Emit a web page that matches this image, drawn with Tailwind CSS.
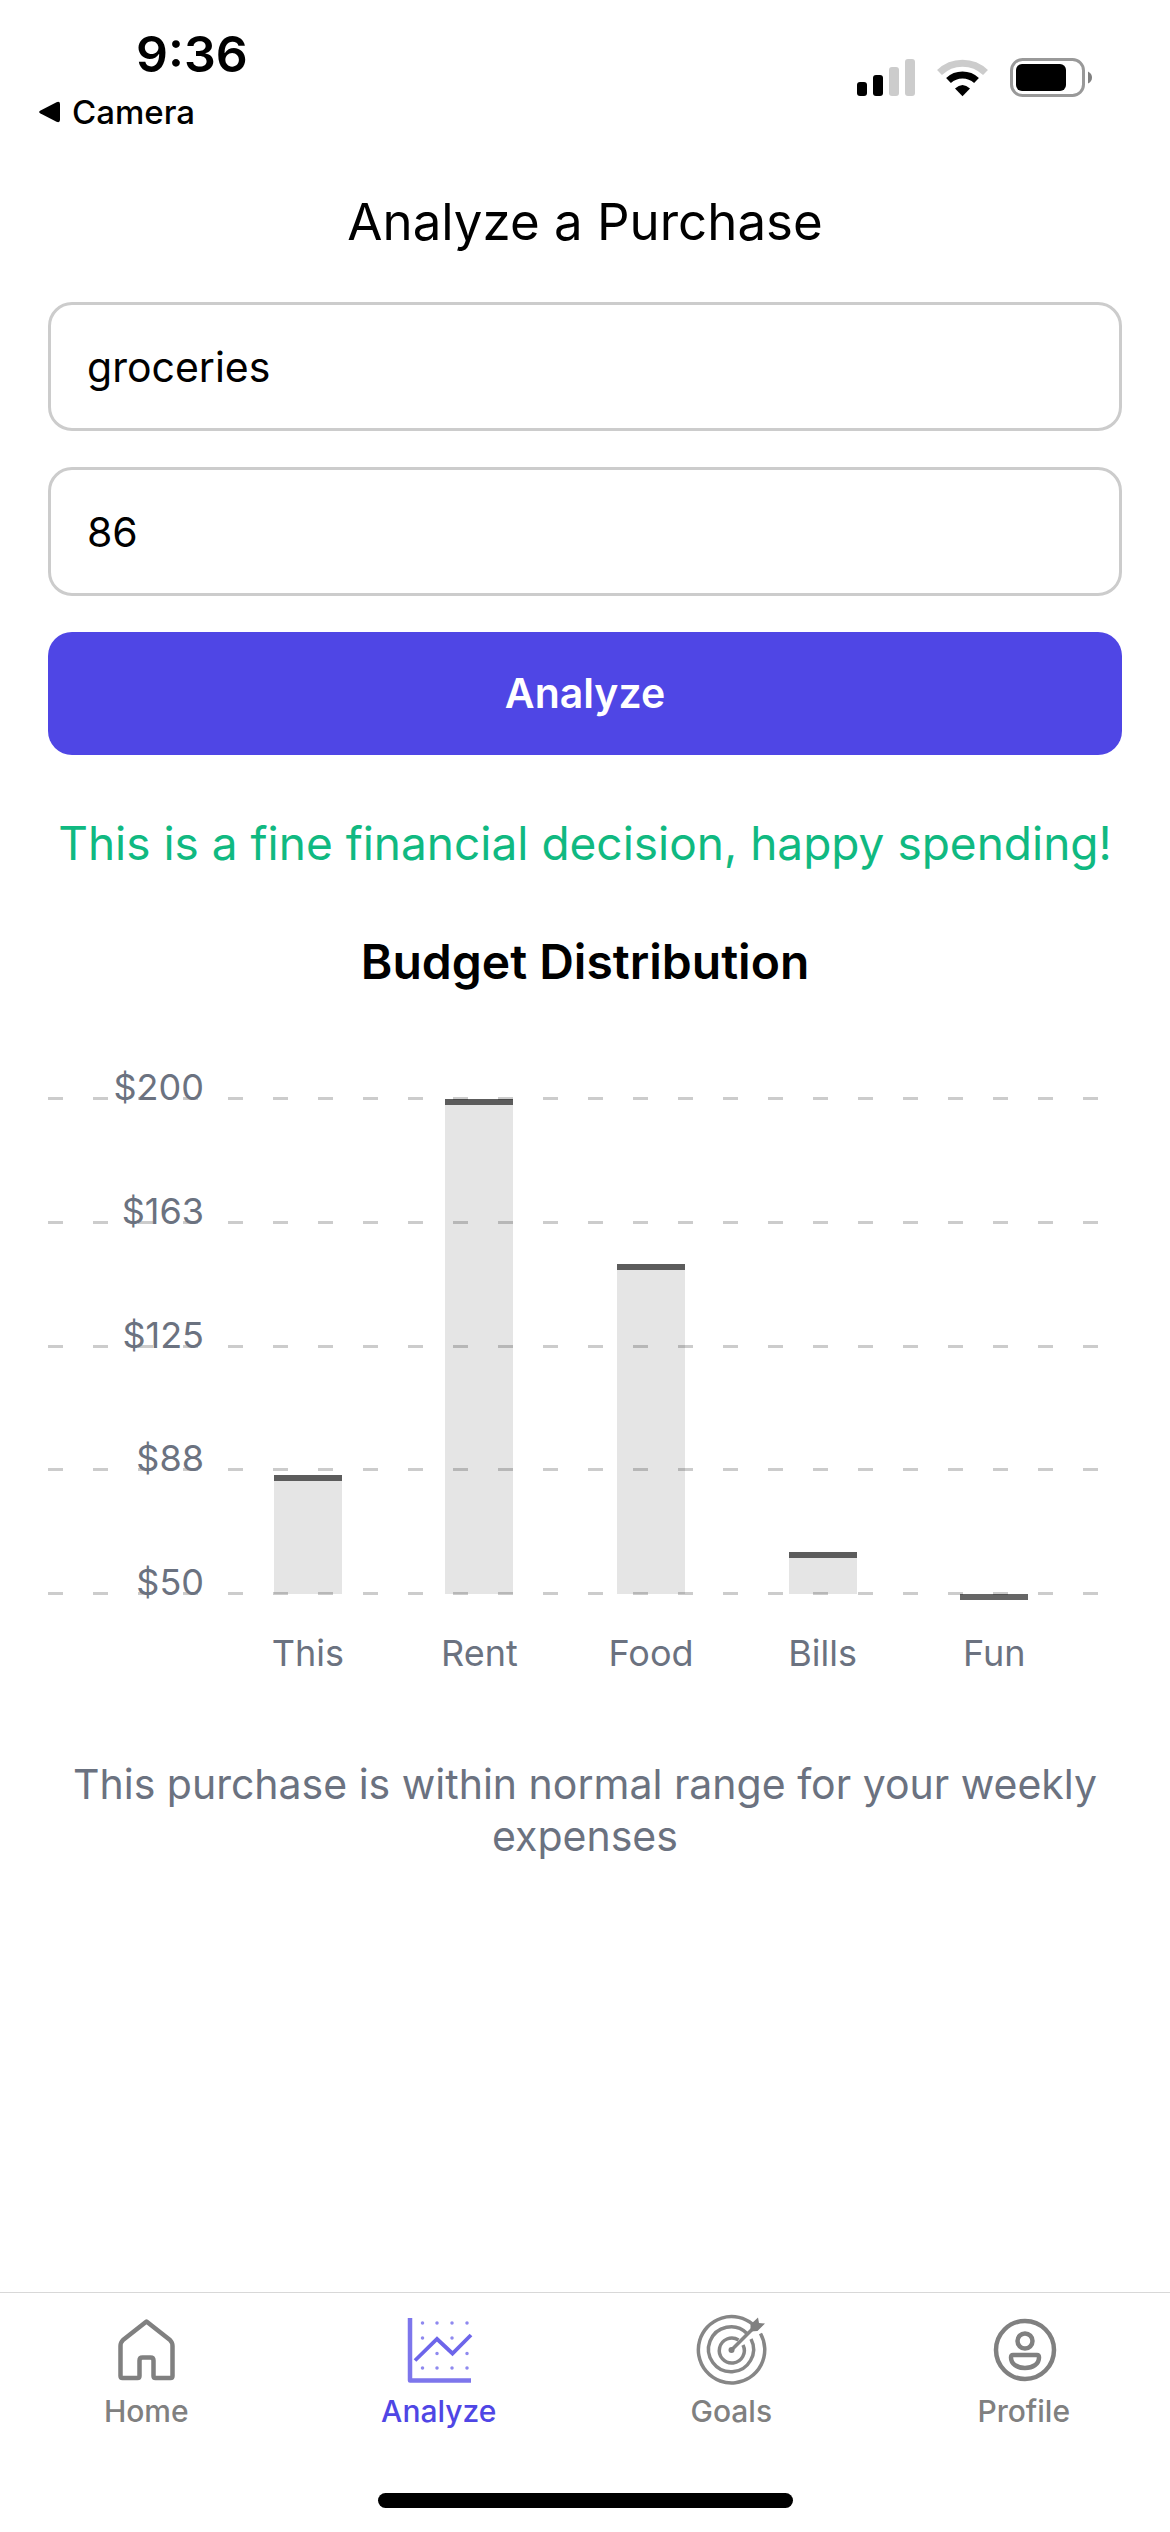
<!DOCTYPE html>
<html lang="en">
<head>
<meta charset="utf-8">
<meta name="viewport" content="width=device-width, initial-scale=1">
<title>Analyze a Purchase</title>
<script src="https://cdn.jsdelivr.net/npm/@tailwindcss/browser@4"></script>
</head>
<body class="flex min-h-screen flex-col bg-white font-['Inter',sans-serif] text-black">

<!-- Status bar -->
<header class="flex items-start justify-between pt-[26px] pr-[78px] pl-[38px]">
  <div class="flex flex-col gap-2.5">
    <time class="pl-[98px] text-[50px] leading-14 font-semibold">9:36</time>
    <button type="button" class="flex items-center gap-2.5 text-[33px] leading-10 font-medium">
      <svg class="h-6 w-6" viewBox="0 0 24 24" aria-hidden="true"><path d="M2.5 10.5 L18.5 2.2 Q22 1 22 4 V20 Q22 23 18.5 21.8 L2.5 13.5 Q-.2 12 2.5 10.5Z" fill="#000"/></svg>
      Camera
    </button>
  </div>
  <div class="mt-8 flex h-10">
    <svg class="h-10 w-[235px]" viewBox="0 0 235 40" role="img" aria-label="Signal, Wi-Fi and battery">
      <rect x="0" y="24" width="10" height="14" rx="3"/>
      <rect x="16" y="17" width="10" height="21" rx="3"/>
      <rect x="32" y="9" width="10" height="29" rx="3" fill="#ccc"/>
      <rect x="48" y="1" width="10" height="37" rx="3" fill="#ccc"/>
      <path d="M82.500 14.500 A33 33 0 0 1 128.500 14.500" fill="none" stroke="#ccc" stroke-width="7"/>
      <path d="M91.500 22.500 A20.500 20.500 0 0 1 119.500 22.500" fill="none" stroke="#000" stroke-width="7"/>
      <path d="M98 30.500 Q105.500 23.500 113 30.500 L105.500 38.200Z"/>
      <rect x="154.500" y="1.500" width="72" height="36" rx="11" fill="none" stroke="#999" stroke-width="3"/>
      <rect x="159" y="6" width="50" height="27" rx="6"/>
      <path d="M231 13.500 Q235 15.500 235 19.500 Q235 23.500 231 25.500Z" fill="#808080"/>
    </svg>
  </div>
</header>

<main class="mt-[58px] flex flex-1 flex-col px-12">
  <h1 class="text-center text-[51px] leading-[64px]">Analyze a Purchase</h1>

  <form class="mt-12 flex flex-col gap-9">
    <input type="text" aria-label="Purchase" value="groceries" class="h-[129px] w-full rounded-3xl border-3 border-[#ccc] bg-white px-9 text-[41px] outline-none">
    <input type="text" aria-label="Amount" inputmode="decimal" value="86" class="h-[129px] w-full rounded-3xl border-3 border-[#ccc] bg-white px-9 text-[41px] outline-none">
    <button type="button" class="h-[123px] w-full rounded-3xl bg-[#4f46e5] text-[41px] font-semibold text-white">Analyze</button>
  </form>

  <p class="mt-[58px] text-center text-[46px] leading-[60px] whitespace-nowrap text-[#10b981]">This is a fine financial decision, happy spending!</p>
  <h2 class="mt-[59px] text-center text-[48px] leading-[60px] font-semibold">Budget Distribution</h2>

  <!-- Bar chart, $50 to $200 -->
  <section class="mt-[107px]" aria-label="Budget Distribution chart">
    <div class="relative flex h-[495px]">
      <!-- Dashed grid lines -->
      <div class="absolute inset-x-0 -top-[2px] -bottom-px flex flex-col justify-between">
        <div class="h-[3px] bg-[repeating-linear-gradient(90deg,#0003_0_15px,transparent_15px_45px)]"></div>
        <div class="h-[3px] bg-[repeating-linear-gradient(90deg,#0003_0_15px,transparent_15px_45px)]"></div>
        <div class="h-[3px] bg-[repeating-linear-gradient(90deg,#0003_0_15px,transparent_15px_45px)]"></div>
        <div class="h-[3px] bg-[repeating-linear-gradient(90deg,#0003_0_15px,transparent_15px_45px)]"></div>
        <div class="h-[3px] bg-[repeating-linear-gradient(90deg,#0003_0_15px,transparent_15px_45px)]"></div>
      </div>
      <!-- Value labels, standing on the grid lines -->
      <div class="absolute -top-[30px] -bottom-[6px] left-0 flex w-[156px] flex-col justify-between text-right text-[36px] leading-9 text-[#6b7280]">
        <span>$200</span><span>$163</span><span>$125</span><span>$88</span><span>$50</span>
      </div>
      <div class="relative mr-[42px] ml-[174px] grid flex-1 grid-cols-5 items-end justify-items-center">
        <div class="w-[68px] border-t-6 border-black/60 bg-black/10" style="height:24%"></div>
        <div class="w-[68px] border-t-6 border-black/60 bg-black/10" style="height:100%"></div>
        <div class="w-[68px] border-t-6 border-black/60 bg-black/10" style="height:66.667%"></div>
        <div class="w-[68px] border-t-6 border-black/60 bg-black/10" style="height:8.400%"></div>
        <div class="h-0 w-[68px]"><div class="h-[6px] bg-black/60"></div></div>
      </div>
    </div>
    <div class="mt-[35px] mr-[42px] ml-[174px] grid grid-cols-5 text-center text-[36px] leading-12 text-[#6b7280]">
      <span>This</span><span>Rent</span><span>Food</span><span>Bills</span><span>Fun</span>
    </div>
  </section>

  <p class="mt-[81px] text-center text-[41px] leading-[52px] text-[#6b7280]">This purchase is within normal range for your weekly expenses</p>
</main>

<!-- Tab bar -->
<nav class="border-t border-[#d8d8d8] pt-5 pb-6" aria-label="Main">
  <div class="grid grid-cols-4 text-[30px] leading-9 font-medium text-[#808080]">
    <a href="#home" class="flex flex-col items-center gap-2">
      <svg class="h-[72px] w-[72px]" viewBox="0 0 72 72" fill="none" stroke="currentColor" stroke-width="4.500" stroke-linejoin="round" aria-hidden="true">
        <path d="M36.500 8.500 L13 27 Q10.500 29.500 10.500 33 V63 Q10.500 65 12.500 65 H27.500 Q29.500 65 29.500 63 V47.500 Q29.500 44.500 32.500 44.500 H40.500 Q43.500 44.500 43.500 47.500 V63 Q43.500 65 45.500 65 H60.500 Q62.500 65 62.500 63 V33 Q62.500 29.500 60 27 Z"/>
      </svg>
      <span>Home</span>
    </a>
    <a href="#analyze" aria-current="page" class="flex flex-col items-center gap-2 text-[#4f46e5]">
      <svg class="h-[72px] w-[72px]" viewBox="0 0 72 72" fill="none" stroke="#7d76ec" stroke-width="4.500" aria-hidden="true">
        <path d="M7 5 V67.500 H68" stroke-linejoin="round"/>
        <path d="M12 47.500 L34 26 L49.500 40.500 L68 22" stroke="#6d65ea" stroke-width="3.800"/>
        <path d="M19.500 10h.01M34 10h.01M49 10h.01M64 10h.01M19.500 25h.01M49 25h.01M34 40.500h.01M64 40.500h.01M19.500 55h.01M34 55h.01M49 55h.01M64 55h.01" stroke="#8f89ef" stroke-width="3.500" stroke-linecap="round"/>
      </svg>
      <span>Analyze</span>
    </a>
    <a href="#goals" class="flex flex-col items-center gap-2">
      <svg class="h-[72px] w-[72px]" viewBox="0 0 72 72" fill="none" stroke="#868686" stroke-width="3.500" aria-hidden="true">
        <path d="M57.500 11 A33.200 33.200 0 1 0 65.500 20.500"/>
        <path d="M52 20.500 A22.500 22.500 0 1 0 56 26"/>
        <path d="M43.500 27 A12.500 12.500 0 1 0 48 32"/>
        <path d="M36.500 37 L60.500 13"/>
        <circle cx="36.500" cy="37" r="3" fill="#808080" stroke="none"/>
        <path d="M55.500 18.500 L55.500 11.500 L63 4.500 L64 10 L70 10.500 L62.500 18 Z" fill="#808080" stroke="none"/>
      </svg>
      <span>Goals</span>
    </a>
    <a href="#profile" class="flex flex-col items-center gap-2">
      <svg class="h-[72px] w-[72px]" viewBox="0 0 72 72" fill="none" stroke="currentColor" stroke-width="4.500" aria-hidden="true">
        <circle cx="37" cy="37" r="29"/>
        <circle cx="37" cy="28" r="7.500"/>
        <path d="M25 42 H49 Q51 42 51 44.500 C51 51 45 55 37 55 C29 55 23 51 23 44.500 Q23 42 25 42Z"/>
      </svg>
      <span>Profile</span>
    </a>
  </div>
  <div class="mx-auto mt-16 h-[15px] w-[415px] rounded-full bg-black"></div>
</nav>

</body>
</html>
